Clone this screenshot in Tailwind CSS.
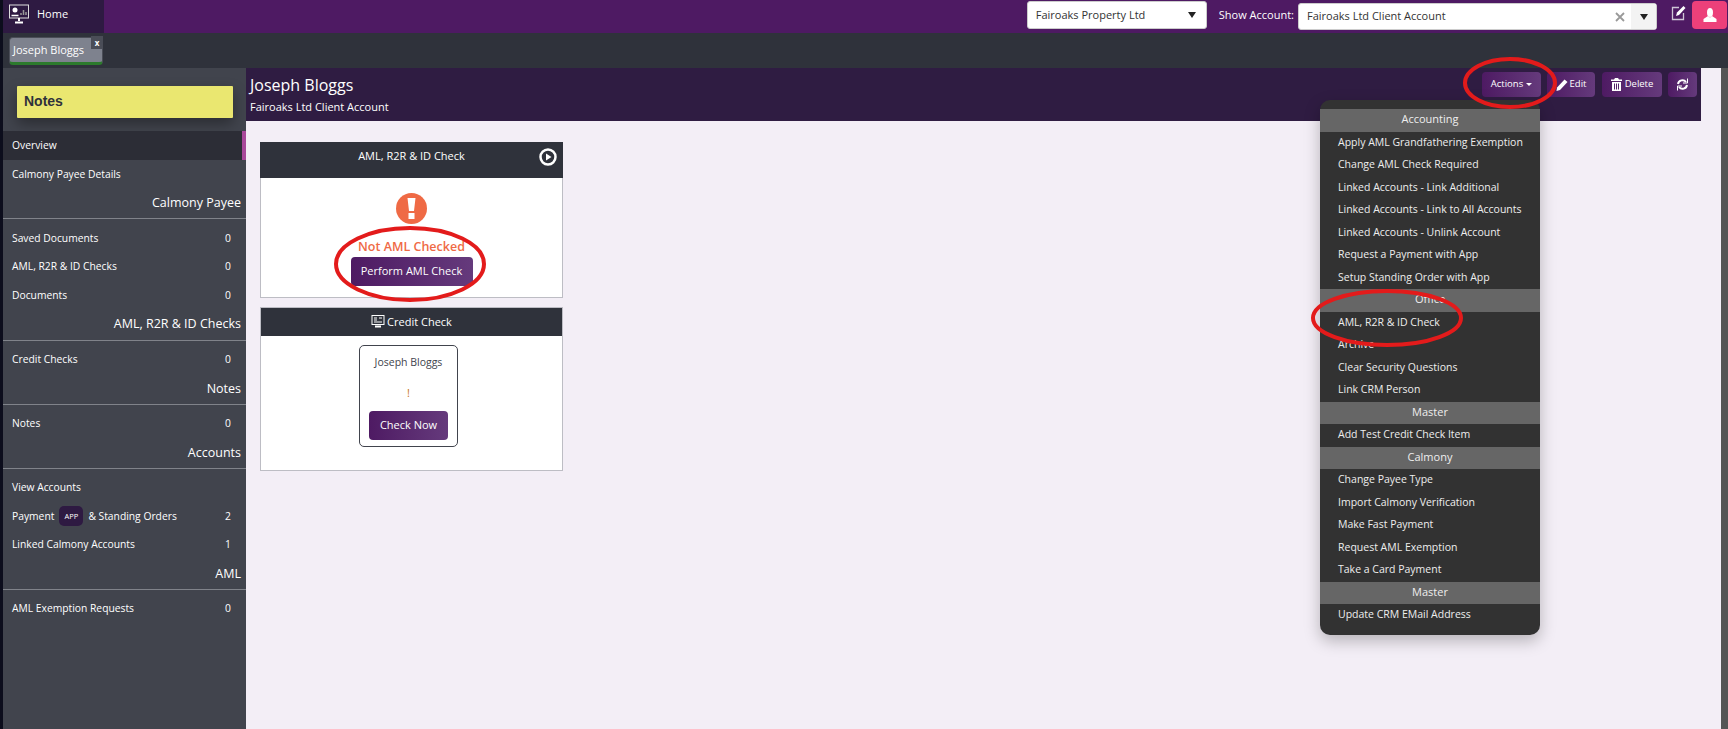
<!DOCTYPE html>
<html lang="en">
<head>
    <meta charset="UTF-8">
    <script src="https://cdn.jsdelivr.net/npm/@tailwindcss/browser@4"></script>
    <title>Joseph Bloggs</title>
</head>
<body class="relative h-[729px] w-[1728px] overflow-hidden bg-[#0c0d1c] pl-[3px] font-['Open_Sans',sans-serif] text-[11px] text-white">
<div class="h-[729px] bg-[#f3eef6]">

    <!-- top bar -->
    <div class="flex h-[33px] bg-[#4e1a63]">
        <div class="flex w-[101px] items-center gap-[8px] bg-[#2e1a42] pb-[5px] pl-[6px] text-[11px] font-medium">
            <svg class="h-[20px] w-[20px]" viewBox="0 0 20 20" fill="none" stroke="#ddd">
                <rect x="0.5" y="1" width="19" height="13" stroke-width="1"/>
                <circle cx="6" cy="6" r="2.500" fill="white" stroke="none"/>
                <path d="M2.500 11.500h7" stroke-width="1.500" stroke="white"/>
                <path d="M12 11V9M14.500 11V6M17 11V8" stroke-width="1.500" stroke="#999"/>
                <path d="M10 14v3M6 18.500h8" stroke-width="2" stroke="white"/>
            </svg>
            Home
        </div>
        <div class="ml-auto flex items-start">
            <div class="mt-[1px] flex h-[28px] w-[180px] items-center justify-between rounded-[3px] border border-[#ccc] bg-white pl-[8px] pr-[10px] text-[#333]">
                <span>Fairoaks Property Ltd</span>
                <span class="h-0 w-0 border-x-[4px] border-t-[6px] border-x-transparent border-t-[#222]"></span>
            </div>
            <span class="ml-[12px] mr-[4px] mt-[7px] font-medium leading-[16px]">Show Account:</span>
            <div class="mt-[3px] flex h-[27px] w-[359px] items-center rounded-[3px] border border-[#ccc] bg-white pl-[8px] text-[#333]">
                <span class="grow">Fairoaks Ltd Client Account</span>
                <svg class="mr-[6px] h-[10px] w-[10px]" viewBox="0 0 10 10" stroke="#999" stroke-width="1.800"><path d="M1 1l8 8M9 1l-8 8"/></svg>
                <span class="flex h-full w-[25px] items-center justify-center bg-[#f3f3f3]"><span class="h-0 w-0 border-x-[4px] border-t-[6px] border-x-transparent border-t-[#222]"></span></span>
            </div>
            <svg class="ml-[14px] mt-[5px] h-[16px] w-[15px]" viewBox="0 0 15 16" fill="none" stroke="#cfc6d6" stroke-width="1.300">
                <path d="M8 2.500H1.500v12h11V8"/>
                <path d="M5 11l1-3.500L12.500 1l2 2L8 10z" fill="white" stroke="none"/>
            </svg>
            <div class="ml-[6px] mr-[1px] mt-[1px] flex h-[28px] w-[35px] items-center justify-center rounded-[4px] bg-[#ec407a]">
                <svg class="h-[14px] w-[14px]" viewBox="0 0 14 14" fill="white">
                    <ellipse cx="7" cy="4.500" rx="3" ry="4.500"/>
                    <path d="M5 8 .5 11v3h13v-3L9 8 7 9.500z"/>
                </svg>
            </div>
        </div>
    </div>

    <!-- tab bar -->
    <div class="flex h-[35px] items-start bg-[#2f323b] pl-[6px] pt-[4px]">
        <div class="relative flex h-[28px] w-[94px] items-center rounded-[4px] border border-b-[3px] border-[#4a4d57] border-b-[#2c7a2c] bg-[#7e828e] pl-[3px]">
            Joseph Bloggs
            <span class="absolute -right-[1px] -top-[2px] flex h-[13px] w-[12px] items-center justify-center bg-[#4a4d57] text-[8px] font-bold leading-none">x</span>
        </div>
    </div>

    <div class="flex h-[661px]">
        <!-- sidebar -->
        <aside class="w-[243px] shrink-0 bg-[#41444d] text-[10.300px] font-medium">
            <div class="h-[63px] pl-[14px] pt-[18px]">
                <div class="flex h-[32px] w-[216px] items-center rounded-[1px] bg-[#eae770] pb-[2px] pl-[7px] font-['Liberation_Sans',sans-serif] text-[14px] font-bold text-[#2f323b] shadow-[0_6px_14px_rgba(0,0,0,0.35)]">Notes</div>
            </div>
            <div class="flex h-[29px] items-center border-r-[4px] border-[#a8489a] bg-[#2c2d36] pl-[9px]">Overview</div>
            <div class="flex h-[28px] items-center pl-[9px] pt-[1px]">Calmony Payee Details</div>
            <div class="mb-[5px] flex h-[31px] items-center justify-end border-b border-[#80838a] pr-[5px] pt-[1px] text-[12.500px]">Calmony Payee</div>
            <div class="flex h-[28.500px] items-center justify-between pl-[9px] pr-[15px] pt-[1px]"><span>Saved Documents</span><span>0</span></div>
            <div class="flex h-[28.500px] items-center justify-between pl-[9px] pr-[15px]"><span>AML, R2R &amp; ID Checks</span><span>0</span></div>
            <div class="flex h-[28.500px] items-center justify-between pl-[9px] pr-[15px] pt-[1px]"><span>Documents</span><span>0</span></div>
            <div class="mb-[5px] flex h-[31px] items-center justify-end border-b border-[#80838a] pr-[5px] text-[12.500px]">AML, R2R &amp; ID Checks</div>
            <div class="flex h-[28px] items-center justify-between pl-[9px] pr-[15px]"><span>Credit Checks</span><span>0</span></div>
            <div class="mb-[5px] flex h-[31px] items-center justify-end border-b border-[#80838a] pr-[5px] pt-[1px] text-[12.500px]">Notes</div>
            <div class="flex h-[28px] items-center justify-between pl-[9px] pr-[15px]"><span>Notes</span><span>0</span></div>
            <div class="mb-[5px] flex h-[31px] items-center justify-end border-b border-[#80838a] pr-[5px] pt-[1px] text-[12.500px]">Accounts</div>
            <div class="flex h-[28px] items-center pl-[9px]">View Accounts</div>
            <div class="flex h-[28.500px] items-center justify-between pl-[9px] pr-[15px] pt-[1px]">
                <span class="flex items-center">Payment
                    <span class="ml-[5px] mr-[5px] flex h-[20px] w-[24px] items-center justify-center rounded-[5px] bg-[#2e1a42] text-[7.500px]">APP</span>
                    &amp; Standing Orders</span>
                <span>2</span>
            </div>
            <div class="flex h-[28.500px] items-center justify-between pl-[9px] pr-[15px] pt-[1px]"><span>Linked Calmony Accounts</span><span>1</span></div>
            <div class="mb-[5px] flex h-[31px] items-center justify-end border-b border-[#80838a] pr-[5px] pt-[1px] text-[12.500px]">AML</div>
            <div class="flex h-[28px] items-center justify-between pl-[9px] pr-[15px]"><span>AML Exemption Requests</span><span>0</span></div>
        </aside>

        <!-- main -->
        <main class="grow">
            <div class="flex h-[53px] w-[1455px] justify-between bg-[#2f1c42] pl-[4px] pr-[4px]">
                <div>
                    <div class="mt-[7px] text-[16px] leading-[20px]">Joseph Bloggs</div>
                    <div class="mt-[3px] text-[11px] font-medium leading-[18px]">Fairoaks Ltd Client Account</div>
                </div>
                <div class="mt-[4px] flex h-[25px] items-center text-[9.500px] font-medium">
                    <div class="flex h-[25px] w-[59px] items-center justify-center gap-[3px] rounded-[4px] bg-gradient-to-r from-[#4e1a63] to-[#653a7c]">Actions <span class="h-0 w-0 border-x-[3px] border-t-[3px] border-x-transparent border-t-white"></span></div>
                    <div class="ml-[6px] flex h-[25px] w-[48px] items-center justify-center gap-[2px] rounded-[4px] bg-gradient-to-r from-[#4e1a63] to-[#653a7c]">
                        <svg class="h-[12px] w-[12px]" viewBox="0 0 12 12" fill="white"><path d="M8.500 0.500 11.500 3 4 11 0.500 12 1 8.500z"/></svg>
                        Edit
                    </div>
                    <div class="ml-[7px] flex h-[25px] w-[60px] items-center justify-center gap-[3px] rounded-[4px] bg-gradient-to-r from-[#4e1a63] to-[#653a7c]">
                        <svg class="h-[13px] w-[11px]" viewBox="0 0 11 13" fill="white"><path d="M4 0h3l1 1.500h3V3H0V1.500h3zM1 4h9v9H1zM3 5.500v6h1v-6zM5 5.500v6h1v-6zM7 5.500v6h1v-6z" fill-rule="evenodd"/></svg>
                        Delete
                    </div>
                    <div class="ml-[6px] flex h-[25px] w-[29px] items-center justify-center rounded-[4px] bg-gradient-to-r from-[#4e1a63] to-[#653a7c]">
                        <svg class="h-[13px] w-[13px]" viewBox="0 0 13 13" fill="none" stroke="white" stroke-width="2"><path d="M2 6a4.500 4.500 0 0 1 8-2M11 7a4.500 4.500 0 0 1-8 2"/><path d="M11.500 0.500v4.500H7M1.500 12.500V8H6" stroke-width="1"/></svg>
                    </div>
                </div>
            </div>

            <div class="ml-[14px] mt-[21px] w-[303px]">
                <div class="relative flex h-[36px] items-start justify-center bg-[#2f323b] pt-[6px] font-medium">
                    <span>AML, R2R &amp; ID Check</span>
                    <svg class="absolute right-[6px] top-[6px] h-[18px] w-[18px]" viewBox="0 0 18 18" fill="none" stroke="white" stroke-width="2.500"><circle cx="9" cy="9" r="7.500"/><path d="M7 5.500 12.500 9 7 12.500z" fill="white" stroke="none"/></svg>
                </div>
                <div class="flex h-[120px] flex-col items-center border border-t-0 border-[#bdbdc4] bg-white pt-[15px]">
                    <div class="flex h-[31px] w-[31px] items-center justify-center rounded-full bg-[#ef6a45]">
                        <svg class="h-[21px] w-[9px]" viewBox="0 0 9 21" fill="white"><path d="M0.500 0h8L7 13H2zM1.500 15h6v6h-6z"/></svg>
                    </div>
                    <div class="mt-[13px] text-[12.500px] font-semibold leading-[20px] text-[#ef6a45]">Not AML Checked</div>
                    <div class="flex h-[29px] w-[122px] items-center justify-center rounded-[4px] bg-gradient-to-r from-[#4e1a63] to-[#653a7c] text-[11px] font-medium">Perform AML Check</div>
                </div>

                <div class="mt-[9px] border border-[#bdbdc4] bg-white">
                    <div class="flex h-[28px] items-center justify-center gap-[2px] bg-[#2f323b] font-medium">
                        <svg class="h-[14px] w-[14px]" viewBox="0 0 14 14" fill="none" stroke="white"><rect x="1" y="0.500" width="12" height="9"/><path d="M3 3h3M3 5h3M8 3h3M3 7h8" stroke-width="1"/><path d="M4 11.500h6" stroke-width="2"/></svg>
                        Credit Check
                    </div>
                    <div class="h-[134px] pt-[9px]">
                        <div class="ml-[98px] flex h-[102px] w-[99px] flex-col items-center rounded-[5px] border border-[#41444d] pt-[7px] text-[#41444d]">
                            <div class="text-[10.500px] leading-[18px]">Joseph Bloggs</div>
                            <div class="mt-[13px] leading-[18px] text-[#c9781f]">!</div>
                            <div class="mt-[9px] flex h-[29px] w-[79px] items-center justify-center rounded-[4px] bg-gradient-to-r from-[#4e1a63] to-[#653a7c] text-[11px] font-medium text-white">Check Now</div>
                        </div>
                    </div>
                </div>
            </div>
        </main>
    </div>

</div>

    <!-- actions dropdown -->
    <div class="absolute left-[1320px] top-[100px] h-[535px] w-[220px] rounded-[10px] bg-[#323232] pt-[9px] text-[10.500px] font-medium text-[#eee] shadow-[0_6px_16px_rgba(0,0,0,0.25)]">
        <div class="flex h-[22.500px] items-center justify-center bg-[#666] pb-[2px] text-[11px]">Accounting</div>
        <div class="flex h-[22.500px] items-center pl-[18px]">Apply AML Grandfathering Exemption</div>
        <div class="flex h-[22.500px] items-center pl-[18px]">Change AML Check Required</div>
        <div class="flex h-[22.500px] items-center pl-[18px]">Linked Accounts - Link Additional</div>
        <div class="flex h-[22.500px] items-center pl-[18px]">Linked Accounts - Link to All Accounts</div>
        <div class="flex h-[22.500px] items-center pl-[18px]">Linked Accounts - Unlink Account</div>
        <div class="flex h-[22.500px] items-center pl-[18px]">Request a Payment with App</div>
        <div class="flex h-[22.500px] items-center pl-[18px]">Setup Standing Order with App</div>
        <div class="flex h-[22.500px] items-center justify-center bg-[#666] pb-[2px] text-[11px]">Office</div>
        <div class="flex h-[22.500px] items-center pl-[18px]">AML, R2R &amp; ID Check</div>
        <div class="flex h-[22.500px] items-center pl-[18px]">Archive</div>
        <div class="flex h-[22.500px] items-center pl-[18px]">Clear Security Questions</div>
        <div class="flex h-[22.500px] items-center pl-[18px]">Link CRM Person</div>
        <div class="flex h-[22.500px] items-center justify-center bg-[#666] pb-[2px] text-[11px]">Master</div>
        <div class="flex h-[22.500px] items-center pl-[18px]">Add Test Credit Check Item</div>
        <div class="flex h-[22.500px] items-center justify-center bg-[#666] pb-[2px] text-[11px]">Calmony</div>
        <div class="flex h-[22.500px] items-center pl-[18px]">Change Payee Type</div>
        <div class="flex h-[22.500px] items-center pl-[18px]">Import Calmony Verification</div>
        <div class="flex h-[22.500px] items-center pl-[18px]">Make Fast Payment</div>
        <div class="flex h-[22.500px] items-center pl-[18px]">Request AML Exemption</div>
        <div class="flex h-[22.500px] items-center pl-[18px]">Take a Card Payment</div>
        <div class="flex h-[22.500px] items-center justify-center bg-[#666] pb-[2px] text-[11px]">Master</div>
        <div class="flex h-[22.500px] items-center pl-[18px]">Update CRM EMail Address</div>
    </div>

    <!-- scrollbar at the right edge -->
    <div class="absolute right-0 top-[68px] h-[661px] w-[7px] bg-[#555]"></div>

    <!-- hand drawn red circles over the screenshot -->
    <svg class="pointer-events-none absolute left-0 top-0 h-[729px] w-[1728px]" viewBox="0 0 1728 729" fill="none" stroke="#e31b1b" stroke-width="4">
        <ellipse cx="1510" cy="83" rx="45" ry="24"/>
        <ellipse cx="410" cy="264" rx="74" ry="36"/>
        <ellipse cx="1387" cy="318" rx="74" ry="27"/>
    </svg>
</body>
</html>
